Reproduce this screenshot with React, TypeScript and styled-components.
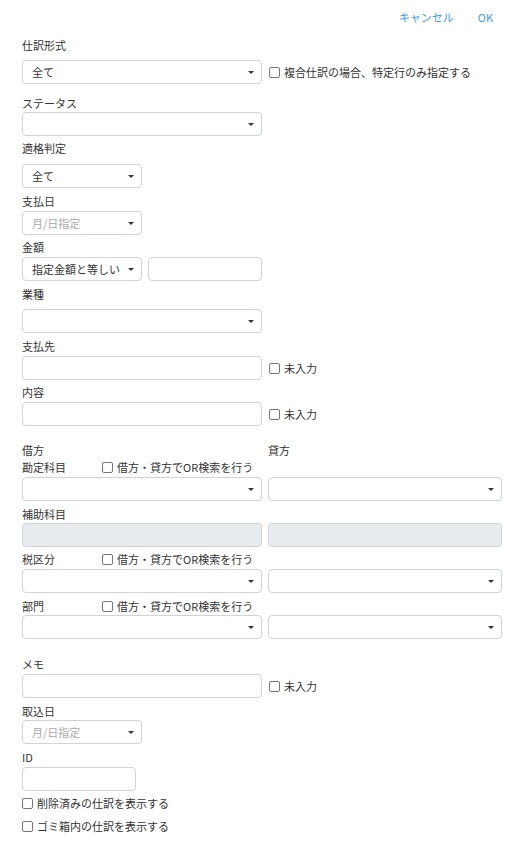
import React from "react";
import styled, { createGlobalStyle } from "styled-components";

const GlobalStyle = createGlobalStyle`
  html, body { margin: 0; padding: 0; background: #fff; }
  body {
    font-family: "Noto Sans CJK JP", "Noto Sans", "Liberation Sans", sans-serif;
    font-size: 11px;
    color: #333;
  }
`;

const Page = styled.div`
  width: 521px;
  padding: 0 0 30px 22px;
  box-sizing: border-box;
`;

const Header = styled.div`
  display: flex;
  justify-content: flex-end;
  gap: 24px;
  height: 36px;
  padding: 8px 28px 0 0;
  box-sizing: border-box;
`;

const HeaderLink = styled.a`
  color: #3f9be6;
  font-size: 11px;
  line-height: 18px;
  cursor: pointer;
  text-decoration: none;
`;

const Group = styled.div<{ $mt?: number }>`
  margin-top: ${(p) => p.$mt ?? 4}px;
`;

const Label = styled.div<{ $mb?: number; $h?: number }>`
  height: ${(p) => p.$h ?? 18}px;
  line-height: ${(p) => p.$h ?? 18}px;
  margin-bottom: ${(p) => p.$mb ?? 1}px;
  font-size: 11px;
  color: #333;
`;

const LabelRow = styled.div<{ $mb?: number }>`
  display: flex;
  align-items: center;
  height: 18px;
  margin-bottom: ${(p) => p.$mb ?? 1}px;
`;

const LabelCell = styled.div<{ $w?: number }>`
  width: ${(p) => (p.$w ? `${p.$w}px` : "auto")};
  font-size: 11px;
  line-height: 18px;
  color: #333;
`;

const Row = styled.div`
  display: flex;
  align-items: center;
  gap: 7px;
`;

const AmountRow = styled.div`
  display: flex;
  align-items: center;
  gap: 6px;
`;

const TwoCol = styled.div`
  display: grid;
  grid-template-columns: 240px 234px;
  column-gap: 6px;
`;

const SelectBox = styled.div<{ $w?: number; $placeholder?: boolean }>`
  width: ${(p) => (p.$w ? `${p.$w}px` : "100%")};
  height: 24px;
  box-sizing: border-box;
  border: 1px solid #ced4da;
  border-radius: 4px;
  background: #fff;
  padding: 0 7px 0 9px;
  display: flex;
  align-items: center;
  gap: 4px;
  font-size: 11px;
  color: ${(p) => (p.$placeholder ? "#aaa" : "#333")};
  white-space: nowrap;
  overflow: hidden;
`;

const Caret = styled.span`
  flex: none;
  margin-left: auto;
  width: 0;
  height: 0;
  border-left: 3px solid transparent;
  border-right: 3px solid transparent;
  border-top: 3px solid #333;
`;

const TextInput = styled.div<{ $w?: number; $disabled?: boolean }>`
  width: ${(p) => (p.$w ? `${p.$w}px` : "100%")};
  height: 24px;
  box-sizing: border-box;
  border: 1px solid #ced4da;
  border-radius: 4px;
  background: ${(p) => (p.$disabled ? "#e9ecef" : "#fff")};
`;

const CheckWrap = styled.label`
  display: inline-flex;
  align-items: center;
  gap: 4px;
  height: 18px;
  font-size: 11px;
  line-height: 18px;
  color: #333;
  white-space: nowrap;
`;

const Box = styled.span`
  display: inline-block;
  width: 9px;
  height: 9px;
  border: 1px solid #777;
  border-radius: 2px;
  background: #fff;
  flex: none;
`;

const CheckBlock = styled.div<{ $mt?: number }>`
  margin-top: ${(p) => p.$mt ?? 0}px;
`;

const Select = ({ w, value, placeholder }: { w?: number; value?: string; placeholder?: string }) => (
  <SelectBox $w={w} $placeholder={!value && !!placeholder}>
    {value || placeholder || ""}
    <Caret />
  </SelectBox>
);

const Check = ({ label }: { label: string }) => (
  <CheckWrap>
    <Box />
    {label}
  </CheckWrap>
);

export default function App() {
  return (
    <>
      <GlobalStyle />
      <Page>
        <Header>
          <HeaderLink>キャンセル</HeaderLink>
          <HeaderLink>OK</HeaderLink>
        </Header>

        <Group $mt={0}>
          <Label $mb={6}>仕訳形式</Label>
          <Row>
            <Select w={240} value="全て" />
            <Check label="複合仕訳の場合、特定行のみ指定する" />
          </Row>
        </Group>

        <Group $mt={10}>
          <Label $mb={0}>ステータス</Label>
          <Select w={240} />
        </Group>

        <Group $mt={3}>
          <Label $mb={7}>適格判定</Label>
          <Select w={120} value="全て" />
        </Group>

        <Group $mt={4}>
          <Label>支払日</Label>
          <Select w={120} placeholder="月/日指定" />
        </Group>

        <Group $mt={3}>
          <Label>金額</Label>
          <AmountRow>
            <Select w={120} value="指定金額と等しい" />
            <TextInput $w={114} />
          </AmountRow>
        </Group>

        <Group $mt={4}>
          <Label $mb={6}>業種</Label>
          <Select w={240} />
        </Group>

        <Group $mt={4}>
          <Label>支払先</Label>
          <Row>
            <TextInput $w={240} />
            <Check label="未入力" />
          </Row>
        </Group>

        <Group $mt={3}>
          <Label>内容</Label>
          <Row>
            <TextInput $w={240} />
            <Check label="未入力" />
          </Row>
        </Group>

        <Group $mt={16}>
          <TwoCol>
            <Label $h={16} $mb={0}>借方</Label>
            <Label $h={16} $mb={0}>貸方</Label>
          </TwoCol>
          <LabelRow $mb={1}>
            <LabelCell $w={80}>勘定科目</LabelCell>
            <Check label="借方・貸方でOR検索を行う" />
          </LabelRow>
          <TwoCol>
            <Select />
            <Select />
          </TwoCol>
        </Group>

        <Group $mt={4}>
          <Label $mb={0}>補助科目</Label>
          <TwoCol>
            <TextInput $disabled />
            <TextInput $disabled />
          </TwoCol>
        </Group>

        <Group $mt={3}>
          <LabelRow $mb={1}>
            <LabelCell $w={80}>税区分</LabelCell>
            <Check label="借方・貸方でOR検索を行う" />
          </LabelRow>
          <TwoCol>
            <Select />
            <Select />
          </TwoCol>
        </Group>

        <Group $mt={4}>
          <LabelRow $mb={0}>
            <LabelCell $w={80}>部門</LabelCell>
            <Check label="借方・貸方でOR検索を行う" />
          </LabelRow>
          <TwoCol>
            <Select />
            <Select />
          </TwoCol>
        </Group>

        <Group $mt={16}>
          <Label>メモ</Label>
          <Row>
            <TextInput $w={240} />
            <Check label="未入力" />
          </Row>
        </Group>

        <Group $mt={4}>
          <Label $mb={0}>取込日</Label>
          <Select w={120} placeholder="月/日指定" />
        </Group>

        <Group $mt={4}>
          <Label>ID</Label>
          <TextInput $w={114} />
        </Group>

        <CheckBlock $mt={3}>
          <Check label="削除済みの仕訳を表示する" />
        </CheckBlock>
        <CheckBlock $mt={5}>
          <Check label="ゴミ箱内の仕訳を表示する" />
        </CheckBlock>
      </Page>
    </>
  );
}
